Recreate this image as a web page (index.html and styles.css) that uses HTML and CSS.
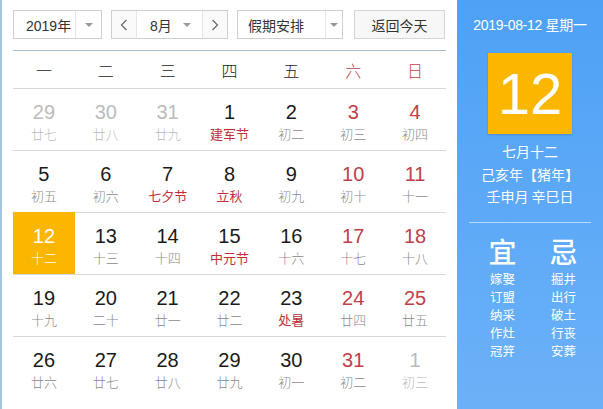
FILE: index.html
```html
<!DOCTYPE html>
<html lang="zh-CN">
<head>
<meta charset="utf-8">
<link rel="stylesheet" href="styles.css">
</head>
<body>
<div class="cal">
  <div class="main">
    <div class="toolbar">
      <div class="sel sel-year">
        <span class="sel-text">2019年</span>
        <span class="sel-arrow"><i class="tri"></i></span>
      </div>
      <div class="sel sel-month">
        <span class="nav"><svg width="8" height="12" viewBox="0 0 8 12"><polyline points="6.5,1 1.5,6 6.5,11" fill="none" stroke="#666" stroke-width="1.2"/></svg></span>
        <span class="month-mid"><span class="sel-text">8月</span><i class="tri"></i></span>
        <span class="nav"><svg width="8" height="12" viewBox="0 0 8 12"><polyline points="1.5,1 6.5,6 1.5,11" fill="none" stroke="#666" stroke-width="1.2"/></svg></span>
      </div>
      <div class="sel sel-holiday">
        <span class="sel-text">假期安排</span>
        <span class="sel-arrow"><i class="tri"></i></span>
      </div>
      <div class="btn">返回今天</div>
    </div>
    <div class="grid">
      <div class="week">
        <span>一</span><span>二</span><span>三</span><span>四</span><span>五</span><span class="wk">六</span><span class="wk">日</span>
      </div>
      <div class="row">
        <div class="cell other"><b>29</b><em>廿七</em></div>
        <div class="cell other"><b>30</b><em>廿八</em></div>
        <div class="cell other"><b>31</b><em>廿九</em></div>
        <div class="cell"><b>1</b><em class="fest">建军节</em></div>
        <div class="cell"><b>2</b><em>初二</em></div>
        <div class="cell wk"><b>3</b><em>初三</em></div>
        <div class="cell wk"><b>4</b><em>初四</em></div>
      </div>
      <div class="row">
        <div class="cell"><b>5</b><em>初五</em></div>
        <div class="cell"><b>6</b><em>初六</em></div>
        <div class="cell"><b>7</b><em class="fest">七夕节</em></div>
        <div class="cell"><b>8</b><em class="fest">立秋</em></div>
        <div class="cell"><b>9</b><em>初九</em></div>
        <div class="cell wk"><b>10</b><em>初十</em></div>
        <div class="cell wk"><b>11</b><em>十一</em></div>
      </div>
      <div class="row">
        <div class="cell today"><b>12</b><em>十二</em></div>
        <div class="cell"><b>13</b><em>十三</em></div>
        <div class="cell"><b>14</b><em>十四</em></div>
        <div class="cell"><b>15</b><em class="fest">中元节</em></div>
        <div class="cell"><b>16</b><em>十六</em></div>
        <div class="cell wk"><b>17</b><em>十七</em></div>
        <div class="cell wk"><b>18</b><em>十八</em></div>
      </div>
      <div class="row">
        <div class="cell"><b>19</b><em>十九</em></div>
        <div class="cell"><b>20</b><em>二十</em></div>
        <div class="cell"><b>21</b><em>廿一</em></div>
        <div class="cell"><b>22</b><em>廿二</em></div>
        <div class="cell"><b>23</b><em class="fest">处暑</em></div>
        <div class="cell wk"><b>24</b><em>廿四</em></div>
        <div class="cell wk"><b>25</b><em>廿五</em></div>
      </div>
      <div class="row last">
        <div class="cell"><b>26</b><em>廿六</em></div>
        <div class="cell"><b>27</b><em>廿七</em></div>
        <div class="cell"><b>28</b><em>廿八</em></div>
        <div class="cell"><b>29</b><em>廿九</em></div>
        <div class="cell"><b>30</b><em>初一</em></div>
        <div class="cell wk"><b>31</b><em>初二</em></div>
        <div class="cell other"><b>1</b><em>初三</em></div>
      </div>
    </div>
  </div>
  <div class="side">
    <div class="side-date">2019-08-12 星期一</div>
    <div class="big-day">12</div>
    <div class="lunar">
      <div>七月十二</div>
      <div>己亥年【猪年】</div>
      <div>壬申月 辛巳日</div>
    </div>
    <div class="side-sep"></div>
    <div class="yiji">
      <div class="col">
        <div class="yj-title">宜</div>
        <div>嫁娶</div><div>订盟</div><div>纳采</div><div>作灶</div><div>冠笄</div>
      </div>
      <div class="col">
        <div class="yj-title">忌</div>
        <div>掘井</div><div>出行</div><div>破土</div><div>行丧</div><div>安葬</div>
      </div>
    </div>
  </div>
</div>
</body>
</html>
```
FILE: styles.css
```css
* { box-sizing: border-box; }
html, body { margin: 0; padding: 0; background: #fff; }
body {
  font-family: "Liberation Sans", "Noto Sans CJK SC", sans-serif;
  color: #222;
  width: 603px;
  height: 409px;
  overflow: hidden;
}
.cal { display: flex; height: 409px; }
.main {
  width: 457px;
  border-left: 2px solid #a6c6e2;
  padding: 10px 11px 0 11px;
}
.toolbar { display: flex; height: 29px; }
.sel {
  display: flex;
  border: 1px solid #cfcfcf;
  height: 29px;
  font-size: 14px;
  color: #333;
  align-items: stretch;
}
.sel-year { width: 89px; margin-right: 9px; }
.sel-year .sel-text { width: 61px; padding-left: 12px; }
.sel-text { display: flex; align-items: center; }
.sel-arrow {
  flex: 1;
  display: flex; align-items: center; justify-content: center;
  border-left: 1px solid #e6e6e6;
}
.tri {
  display: block;
  width: 0; height: 0;
  border-left: 4px solid transparent;
  border-right: 4px solid transparent;
  border-top: 4px solid #999;
}
.sel-month { width: 117px; margin-right: 9px; }
.nav {
  width: 24px;
  display: flex; align-items: center; justify-content: center;
  background: #fafafa;
}
.month-mid {
  flex: 1;
  display: flex; align-items: center;
  padding-left: 13px; padding-right: 11px;
  justify-content: space-between;
  border-left: 1px solid #e6e6e6;
  border-right: 1px solid #e6e6e6;
}
.sel-holiday { width: 106px; margin-right: 11px; }
.sel-holiday .sel-text { width: 87px; padding-left: 10px; }
.btn {
  width: 91px;
  border: 1px solid #d6d6d6;
  background: #f7f7f7;
  font-size: 14px;
  color: #333;
  display: flex; align-items: center; justify-content: center;
}
.grid { margin-top: 11px; border-top: 1px solid #a9bccc; }
.week {
  display: grid;
  grid-template-columns: repeat(7, 1fr);
  height: 38px;
  align-items: center;
  text-align: center;
  font-size: 16px;
  font-family: "Noto Sans CJK SC", sans-serif;
  font-weight: 300;
  border-bottom: 1px solid #d8d8d8;
  color: #222;
}
.week .wk { color: #c0404a; }
.row {
  display: grid;
  grid-template-columns: repeat(7, 1fr);
  height: 62px;
  border-bottom: 1px solid #d8d8d8;
}
.row.last { border-bottom: none; }
.cell {
  display: flex; flex-direction: column; align-items: center;
  padding-top: 12px;
}
.cell b {
  font-weight: normal;
  font-size: 20px;
  line-height: 22px;
  color: #1a1a1a;
}
.cell em {
  font-style: normal;
  font-size: 13px;
  line-height: 17px;
  margin-top: 2px;
  color: #8a8a8a;
  font-family: "Noto Sans CJK SC", sans-serif;
  font-weight: 300;
}
.cell.wk b { color: #c0404a; }
.cell em.fest { color: #c0303a; font-weight: 400; }
.cell.other b { color: #bbb; }
.cell.other em { color: #bbb; }
.cell.today { background: #fbb600; margin-top: -1px; padding-top: 13px; }
.cell.today b, .cell.today em { color: #fff; }
.side {
  width: 146px;
  background: linear-gradient(#4ea1f6, #6cb1f8);
  color: #fff;
  display: flex; flex-direction: column; align-items: center;
  font-family: "Noto Sans CJK SC", sans-serif;
}
.side-date {
  margin-top: 15px;
  font-size: 14px;
  line-height: 20px;
  font-family: "Liberation Sans", "Noto Sans CJK SC", sans-serif;
  letter-spacing: -0.3px;
}
.big-day {
  margin-top: 18px;
  width: 84px;
  height: 81px;
  background: #fbb600;
  box-shadow: 0 1px 2px rgba(0,0,0,0.15);
  font-family: "Liberation Sans", sans-serif;
  font-size: 58px;
  line-height: 81px;
  text-align: center;
}
.lunar {
  margin-top: 6px;
  text-align: center;
  font-size: 14px;
  line-height: 22.5px;
}
.side-sep {
  margin-top: 14px;
  width: 122px;
  height: 1px;
  background: rgba(255,255,255,0.55);
}
.yiji {
  display: flex;
  gap: 33px;
  margin-top: 12px;
  padding-left: 6px;
}
.col {
  display: flex; flex-direction: column; align-items: center;
  font-size: 12.4px;
  line-height: 18px;
}
.yj-title {
  font-size: 28px;
  line-height: 32px;
  margin-bottom: 3px;
  font-weight: 500;
}
```
